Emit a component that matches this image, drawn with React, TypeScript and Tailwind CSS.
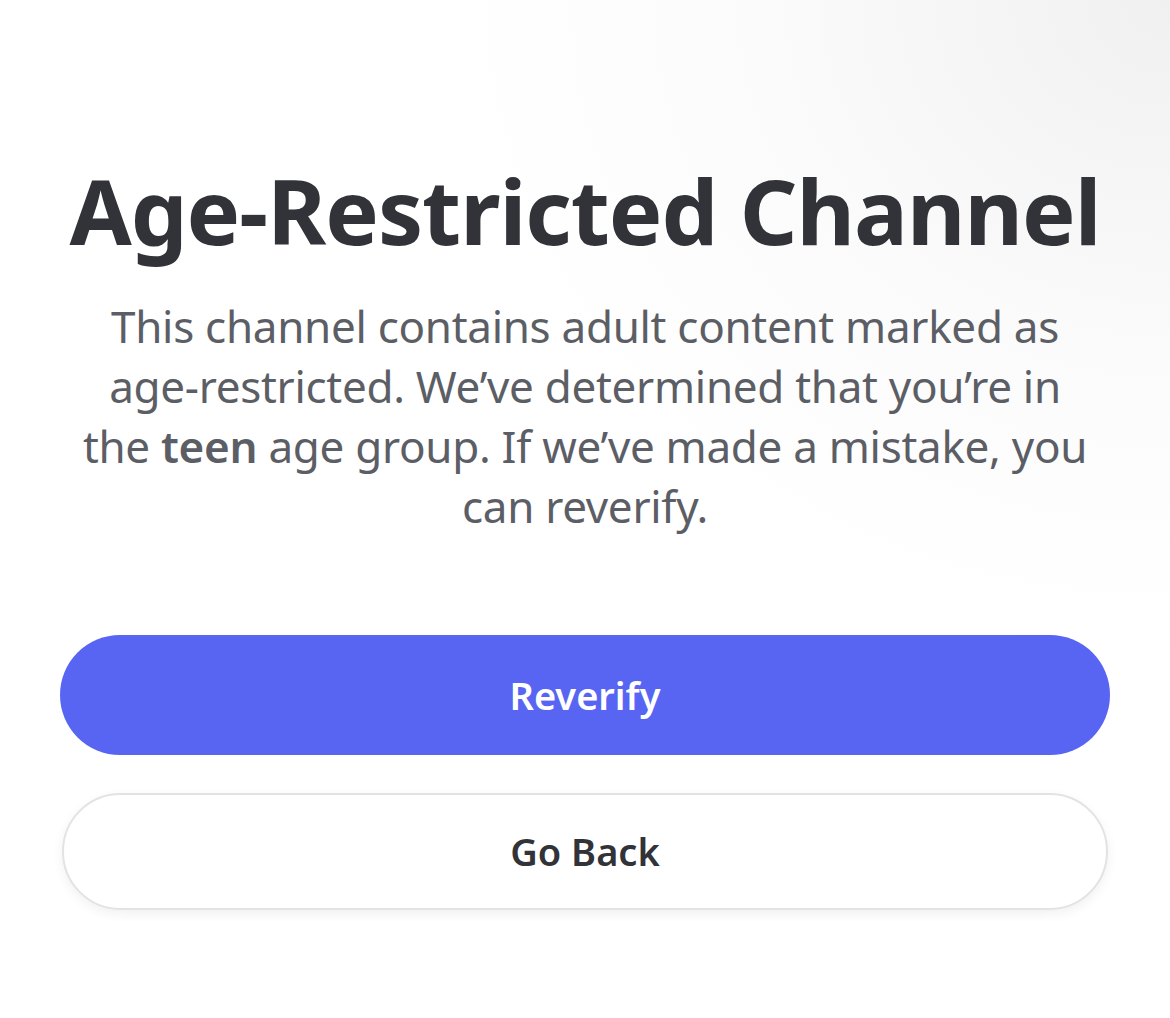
export default function App() {
  return (
    <div
      className="w-[1170px] h-[1018px] overflow-hidden flex flex-col items-center px-[60px] bg-[radial-gradient(ellipse_at_top_right,#f0f0f0_0%,#fbfbfb_25%,#ffffff_45%)]"
      style={{ fontFamily: '"Noto Sans", "Open Sans", sans-serif' }}
    >
      <h1 className="mt-[150px] text-[90px] leading-[120px] font-bold text-[#313338] tracking-[-1px] whitespace-nowrap">
        Age-Restricted Channel
      </h1>
      <p className="mt-[26px] text-[44px] leading-[60px] text-[#5c5e66] text-center whitespace-nowrap tracking-[-0.3px]">
        This channel contains adult content marked as
        <br />
        age-restricted. We’ve determined that you’re in
        <br />
        the <span className="font-semibold">teen</span> age group. If we’ve made a mistake, you
        <br />
        can reverify.
      </p>
      <div className="mt-[99px] w-full flex flex-col gap-[38px]">
        <button className="h-[120px] w-full rounded-full bg-[#5865f2] text-white text-[38px] font-semibold">
          Reverify
        </button>
        <button className="h-[117px] mx-[2px] rounded-full bg-white border-2 border-[#e3e3e5] text-[#313338] text-[38px] font-semibold shadow-[0_4px_12px_rgba(0,0,0,0.06)]">
          Go Back
        </button>
      </div>
    </div>
  );
}
